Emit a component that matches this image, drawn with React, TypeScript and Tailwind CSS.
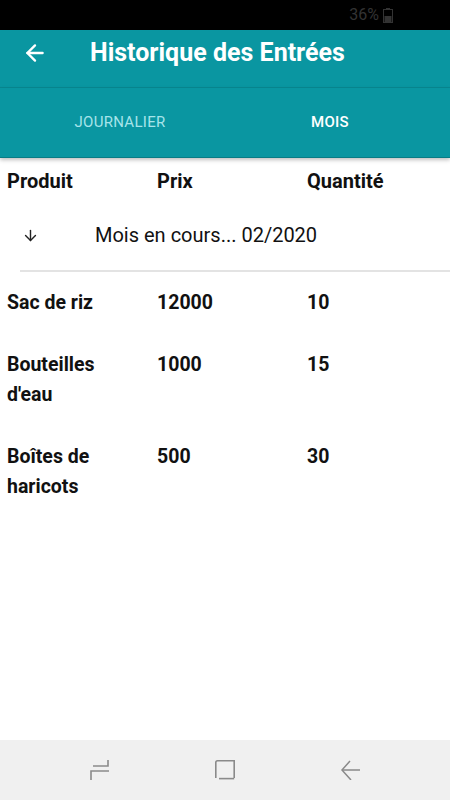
import { ArrowLeft, ArrowDown } from "lucide-react"

const LIGNES = [
  { nom: "Sac de riz", prix: "12000", qte: "10" },
  { nom: "Bouteilles d'eau", prix: "1000", qte: "15" },
  { nom: "Boîtes de haricots", prix: "500", qte: "30" },
]

export default function App() {
  return (
    <main className="w-[450px] h-[800px] bg-white flex flex-col font-['Roboto',sans-serif] overflow-hidden">
      {/* barre d'état */}
      <div className="h-[30px] bg-black flex items-center justify-end pr-[57px] gap-[4px]">
        <span className="text-[16px] text-[#333] leading-none">36%</span>
        <svg width="10" height="15" viewBox="0 0 10 15">
          <rect x="3" y="0" width="4" height="2" fill="#333" />
          <rect x="0.5" y="1.5" width="9" height="13" fill="none" stroke="#333" />
          <rect x="1.5" y="8" width="7" height="6" fill="#333" />
        </svg>
      </div>

      {/* app bar */}
      <div className="h-[58px] bg-[#0a96a1] flex items-center pb-[12px] border-b border-[#088891]">
        <ArrowLeft className="ml-[22px] text-white" size={26} strokeWidth={2.2} />
        <span className="ml-[42px] text-[25px] font-bold text-white">Historique des Entrées</span>
      </div>

      {/* onglets */}
      <div className="h-[70px] bg-[#0a96a1] grid grid-cols-2 items-center shadow-[0_2px_4px_rgba(0,0,0,0.25)] border-b border-[#087c85]">
        <span className="text-center text-[15px] text-[#a6e4ea] tracking-[0.3px] pl-[15px]">JOURNALIER</span>
        <span className="text-center text-[15px] text-white font-medium tracking-[0.3px] pr-[15px]">MOIS</span>
      </div>

      {/* entête tableau */}
      <div className="grid grid-cols-[150px_150px_1fr] pl-[7px] pt-[8px] h-[44px] text-[20px] font-bold text-[#111]">
        <span>Produit</span>
        <span>Prix</span>
        <span>Quantité</span>
      </div>

      <div className="flex items-center h-[68px] pb-[2px]">
        <ArrowDown className="ml-[22px] text-[#222]" size={17} strokeWidth={2} />
        <span className="ml-[56px] text-[20px] text-[#111]">Mois en cours... 02/2020</span>
      </div>
      <div className="ml-[20px] h-[2px] bg-[#e3e3e3]"></div>

      <div className="flex flex-col">
        {LIGNES.map((l) => (
          <div key={l.nom} className="grid grid-cols-[150px_150px_1fr] pl-[7px] py-[16px] text-[19.5px] leading-[30px] font-bold text-[#111]">
            <span className="pr-[20px]">{l.nom}</span>
            <span>{l.prix}</span>
            <span>{l.qte}</span>
          </div>
        ))}
      </div>

      <div className="flex-1"></div>

      {/* barre de navigation */}
      <div className="h-[60px] bg-[#f0f0f0] flex items-center justify-center gap-[105px]">
        <svg width="20" height="20" viewBox="0 0 20 20" fill="none" stroke="#8a8a8a" strokeWidth="1.6">
          <path d="M18 0 V6 H3" />
          <path d="M19 11 H1 V20" />
        </svg>
        <svg width="20" height="20" viewBox="0 0 20 20" fill="none" stroke="#8a8a8a" strokeWidth="1.6">
          <path d="M0.8 18 V2.5 Q0.8 0.8 2.5 0.8 H19.2 V18" />
          <path d="M4 18.6 H19.2" />
        </svg>
        <svg width="20" height="20" viewBox="0 0 20 20" fill="none" stroke="#8a8a8a" strokeWidth="1.5">
          <path d="M2 10 H20" />
          <path d="M10 1 L2 10 L11 20" />
        </svg>
      </div>
    </main>
  )
}
